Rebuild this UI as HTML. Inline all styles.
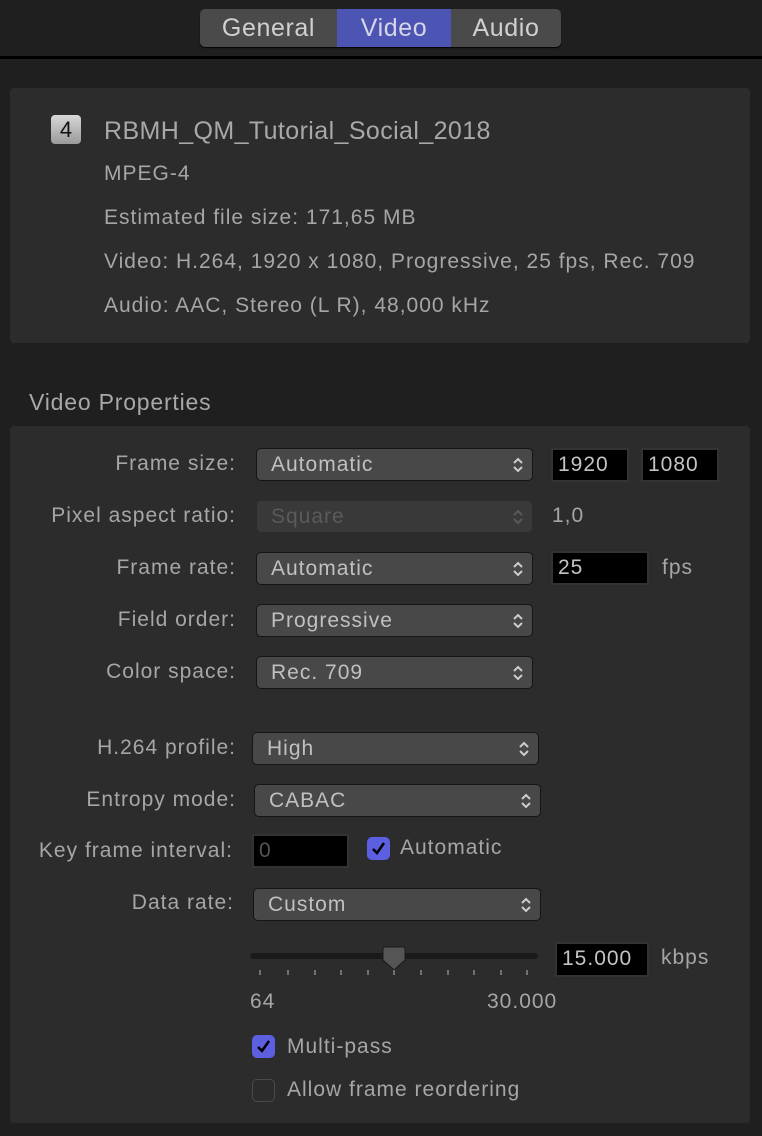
<!DOCTYPE html><html><head><style>
*{margin:0;padding:0;box-sizing:border-box}
body{width:762px;height:1136px;background:#1f1f1f;font-family:"Liberation Sans",sans-serif;color:#a6a6a6;position:relative;overflow:hidden;font-size:21px;letter-spacing:1px}
.a{position:absolute;white-space:nowrap}
.t{font-size:21px;line-height:24px}
.lab{position:absolute;font-size:21px;line-height:24px;text-align:right;white-space:nowrap;letter-spacing:1px}
.pop{position:absolute;height:33px;background:#484848;border:1px solid #151515;border-radius:5px;font-size:21px;line-height:31px;padding-left:14px;color:#c0c0c0}
.pop svg{position:absolute;right:8px;top:7px}
.fld{position:absolute;height:34px;background:#000;border:2px solid #333;font-size:21px;line-height:30px;padding-left:5px;color:#c4c4c4}
.cb{position:absolute;width:23px;height:23px;border-radius:5px;background:#5b5fe0}
.cb svg{position:absolute;left:3px;top:3px}
</style></head><body>
<div class="a" style="left:0;top:56px;width:762px;height:3px;background:#000"></div>
<div class="a" style="left:200px;top:9px;width:361px;height:38px;background:#4a4a4a;border-radius:5px;overflow:hidden;box-shadow:0 1px 1px #000">
<div class="a" style="left:0;top:0;width:137px;height:38px;text-align:center;font-size:25px;line-height:38px;color:#d0d0d0;letter-spacing:0.6px">General</div>
<div class="a" style="left:137px;top:0;width:114px;height:38px;background:#4c55b4;text-align:center;font-size:25px;line-height:38px;color:#d6d6e6;letter-spacing:0.6px">Video</div>
<div class="a" style="left:251px;top:0;width:110px;height:38px;text-align:center;font-size:25px;line-height:38px;color:#d0d0d0;letter-spacing:0.6px">Audio</div>
</div>
<div class="a" style="left:10px;top:88px;width:740px;height:255px;background:#2c2c2c;border-radius:4px"></div>
<div class="a" style="left:51px;top:115px;width:30px;height:29px;background:linear-gradient(#d8d8d8,#9a9a9a);border-radius:4px;color:#111;font-size:22px;line-height:29px;text-align:center;letter-spacing:0">4</div>
<div class="a" style="left:104px;top:116px;font-size:25px;line-height:30px;color:#a8a8a8;letter-spacing:0.4px">RBMH_QM_Tutorial_Social_2018</div>
<div class="a t" style="left:104px;top:162px">MPEG-4</div>
<div class="a t" style="left:104px;top:206px">Estimated file size: 171,65 MB</div>
<div class="a t" style="left:104px;top:250px">Video: H.264, 1920 x 1080, Progressive, 25 fps, Rec. 709</div>
<div class="a t" style="left:104px;top:294px">Audio: AAC, Stereo (L R), 48,000 kHz</div>
<div class="a" style="left:29px;top:389px;font-size:23px;line-height:26px;color:#a8a8a8;letter-spacing:0.8px">Video Properties</div>
<div class="a" style="left:10px;top:426px;width:740px;height:697px;background:#2c2c2c;border-radius:4px"></div>

<div class="lab" style="right:526px;top:452px">Frame size:</div>
<div class="pop" style="left:256px;top:448px;width:277px">Automatic<svg width="12" height="18" viewBox="0 0 12 18"><path d="M2 7L6 3L10 7M2 11L6 15L10 11" stroke="#ccc" stroke-width="2" fill="none"/></svg></div>
<div class="fld" style="left:551px;top:448px;width:78px">1920</div>
<div class="fld" style="left:641px;top:448px;width:78px">1080</div>

<div class="lab" style="right:526px;top:504px">Pixel aspect ratio:</div>
<div class="pop" style="left:256px;top:500px;width:277px;background:#393939;border-color:#2c2c2c;color:#5a5a5a">Square<svg width="12" height="18" viewBox="0 0 12 18"><path d="M2 7L6 3L10 7M2 11L6 15L10 11" stroke="#5a5a5a" stroke-width="2" fill="none"/></svg></div>
<div class="a t" style="left:552px;top:504px">1,0</div>

<div class="lab" style="right:526px;top:556px">Frame rate:</div>
<div class="pop" style="left:256px;top:552px;width:277px">Automatic<svg width="12" height="18" viewBox="0 0 12 18"><path d="M2 7L6 3L10 7M2 11L6 15L10 11" stroke="#ccc" stroke-width="2" fill="none"/></svg></div>
<div class="fld" style="left:551px;top:551px;width:98px">25</div>
<div class="a t" style="left:662px;top:556px">fps</div>

<div class="lab" style="right:526px;top:608px">Field order:</div>
<div class="pop" style="left:256px;top:604px;width:277px">Progressive<svg width="12" height="18" viewBox="0 0 12 18"><path d="M2 7L6 3L10 7M2 11L6 15L10 11" stroke="#ccc" stroke-width="2" fill="none"/></svg></div>

<div class="lab" style="right:526px;top:660px">Color space:</div>
<div class="pop" style="left:256px;top:656px;width:277px">Rec. 709<svg width="12" height="18" viewBox="0 0 12 18"><path d="M2 7L6 3L10 7M2 11L6 15L10 11" stroke="#ccc" stroke-width="2" fill="none"/></svg></div>

<div class="lab" style="right:526px;top:736px">H.264 profile:</div>
<div class="pop" style="left:252px;top:732px;width:287px">High<svg width="12" height="18" viewBox="0 0 12 18"><path d="M2 7L6 3L10 7M2 11L6 15L10 11" stroke="#ccc" stroke-width="2" fill="none"/></svg></div>

<div class="lab" style="right:526px;top:788px">Entropy mode:</div>
<div class="pop" style="left:254px;top:784px;width:287px">CABAC<svg width="12" height="18" viewBox="0 0 12 18"><path d="M2 7L6 3L10 7M2 11L6 15L10 11" stroke="#ccc" stroke-width="2" fill="none"/></svg></div>

<div class="lab" style="right:529px;top:839px">Key frame interval:</div>
<div class="fld" style="left:252px;top:834px;width:97px;color:#555">0</div>
<div class="cb" style="left:367px;top:837px"><svg width="17" height="17" viewBox="0 0 17 17"><path d="M3 9L7 13L14 3" stroke="#000" stroke-width="2.5" fill="none"/></svg></div>
<div class="a t" style="left:400px;top:836px">Automatic</div>

<div class="lab" style="right:528px;top:891px">Data rate:</div>
<div class="pop" style="left:253px;top:888px;width:288px">Custom<svg width="12" height="18" viewBox="0 0 12 18"><path d="M2 7L6 3L10 7M2 11L6 15L10 11" stroke="#ccc" stroke-width="2" fill="none"/></svg></div>

<div class="a" style="left:250px;top:953px;width:288px;height:6px;background:#1a1a1a;border-radius:3px"></div>
<svg class="a" style="left:250px;top:946px" width="300" height="32">
<path d="M133 3q0-2 2-2h18q2 0 2 2v11l-11 10l-11-10z" fill="#555" stroke="#1a1a1a"/>
<g stroke="#888" stroke-width="1.5">
<path d="M10 24v5M38 24v5M65 24v5M91 24v5M118 24v5M144 24v5M171 24v5M198 24v5M224 24v5M251 24v5M277 24v5"/></g></svg>
<div class="fld" style="left:555px;top:942px;width:94px;height:35px">15.000</div>
<div class="a t" style="left:661px;top:946px">kbps</div>
<div class="a t" style="left:250px;top:990px">64</div>
<div class="a t" style="left:487px;top:990px">30.000</div>

<div class="cb" style="left:252px;top:1035px"><svg width="17" height="17" viewBox="0 0 17 17"><path d="M3 9L7 13L14 3" stroke="#000" stroke-width="2.5" fill="none"/></svg></div>
<div class="a t" style="left:287px;top:1035px">Multi-pass</div>
<div class="a" style="left:252px;top:1079px;width:23px;height:23px;border:1.5px solid #4a4a4a;border-radius:5px;background:#2c2c2c"></div>
<div class="a t" style="left:287px;top:1078px">Allow frame reordering</div>
</body></html>
